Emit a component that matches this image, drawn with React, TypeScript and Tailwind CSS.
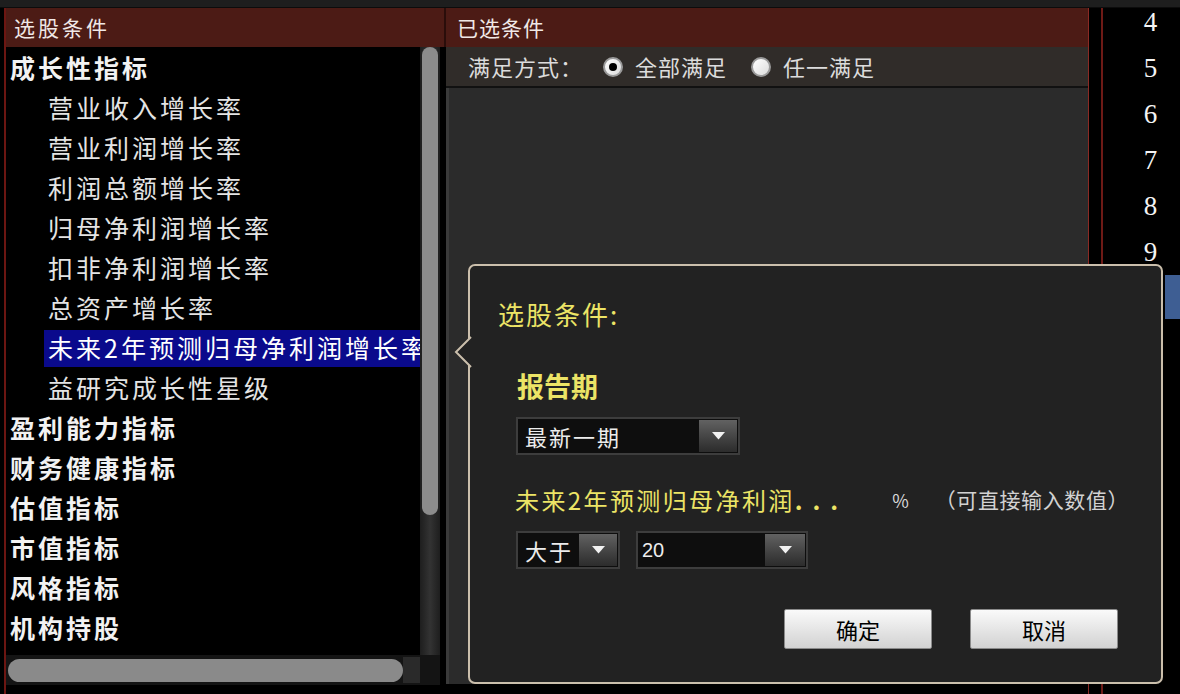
import React from "react"

const cjk = { fontFamily: '"Noto Sans CJK SC", "Noto Sans", sans-serif' }

interface TreeRow {
  label: string
  level: 0 | 1
  active?: boolean
}

const rows: TreeRow[] = [
  { label: "成长性指标", level: 0 },
  { label: "营业收入增长率", level: 1 },
  { label: "营业利润增长率", level: 1 },
  { label: "利润总额增长率", level: 1 },
  { label: "归母净利润增长率", level: 1 },
  { label: "扣非净利润增长率", level: 1 },
  { label: "总资产增长率", level: 1 },
  { label: "未来2年预测归母净利润增长率", level: 1, active: true },
  { label: "益研究成长性星级", level: 1 },
  { label: "盈利能力指标", level: 0 },
  { label: "财务健康指标", level: 0 },
  { label: "估值指标", level: 0 },
  { label: "市值指标", level: 0 },
  { label: "风格指标", level: 0 },
  { label: "机构持股", level: 0 },
  { label: "北上资金", level: 0 },
]

const rankNumbers = ["4", "5", "6", "7", "8", "9"]

function Radio({ checked }: { checked?: boolean }) {
  return (
    <span className="flex h-[20px] w-[20px] items-center justify-center rounded-full border-2 border-[#9a9a9a] bg-gradient-to-br from-white to-[#dcdcdc]">
      {checked && <span className="h-[8px] w-[8px] rounded-full bg-black" />}
    </span>
  )
}

function DropButton({ width }: { width: string }) {
  return (
    <span className={`flex h-full ${width} items-center justify-center bg-gradient-to-b from-[#626262] to-[#2c2c2c]`}>
      <svg width="13" height="8" viewBox="0 0 13 8">
        <path d="M0 0 H13 L6.5 7.5 Z" fill="#f2f2f2" />
      </svg>
    </span>
  )
}

function Select({ value, className, btn }: { value: string; className: string; btn: string }) {
  return (
    <div className={`flex h-[38px] items-stretch border-2 border-[#3d3d3d] bg-[#0e0e0e] p-[1px] ${className}`}>
      <span className="flex flex-1 items-center pl-[6px] text-[22px] tracking-[2px] text-[#ececec]">{value}</span>
      <DropButton width={btn} />
    </div>
  )
}

function ConditionDialog() {
  return (
    <div
      className="absolute left-[468px] top-[264px] flex h-[420px] w-[695px] flex-col rounded-[7px] border-2 border-[#cbbfac] bg-[#222222] pl-[28px] pt-[33px]"
      style={cjk}
    >
      <svg className="absolute left-[-16px] top-[70px]" width="18" height="32" viewBox="0 0 18 32">
        <path d="M17 1 L2 16 L17 31" fill="#222222" stroke="#cbbfac" strokeWidth="2" />
      </svg>
      <div className="h-[30px] text-[26px] leading-[30px] tracking-[2px] text-[#ece466]">选股条件:</div>

      <div className="ml-[19px] mt-[41px] h-[32px] text-[27px] font-semibold leading-[32px] text-[#ece466]">报告期</div>
      <Select value="最新一期" className="ml-[18px] mt-[15px] w-[224px]" btn="w-[38px]" />

      <div className="ml-[17px] mt-[30px] flex h-[30px] items-center">
        <span className="text-[24px] tracking-[2.4px] text-[#ece466]">未来2年预测归母净利润</span>
        <span className="text-[24px] font-bold tracking-[10px] text-[#ece466]">...</span>
        <span className="ml-[44px] text-[18px] text-[#d8d8d8]">%</span>
        <span className="ml-[26px] text-[21px] tracking-[0.6px] text-[#d2d2d2]">（可直接输入数值）</span>
      </div>

      <div className="ml-[18px] mt-[16px] flex gap-[16px]">
        <Select value="大于" className="w-[104px]" btn="w-[38px]" />
        <div className="flex h-[38px] w-[172px] items-stretch border-2 border-[#3d3d3d] bg-[#0e0e0e] p-[1px]">
          <span className="flex flex-1 items-center pl-[3px] text-[20px] text-[#ececec]" style={{ fontFamily: '"Liberation Sans Narrow", "Liberation Sans", sans-serif' }}>
            20
          </span>
          <DropButton width="w-[40px]" />
        </div>
      </div>

      <div className="mt-[40px] flex justify-end gap-[38px] pr-[43px]">
        {["确定", "取消"].map((t) => (
          <button
            key={t}
            className="h-[40px] w-[148px] rounded-[2px] border border-[#8a8a8a] bg-gradient-to-b from-[#fafafa] to-[#d2d2d2] text-[22px] text-black"
          >
            {t}
          </button>
        ))}
      </div>
    </div>
  )
}

export default function App() {
  return (
    <div className="relative flex h-[694px] w-[1180px] flex-col overflow-hidden bg-black" style={cjk}>
      <div className="h-[8px] border-b border-[#0c0c0c] bg-[#1e1e1e]" />

      <div className="flex flex-1">
        {/* left edge */}
        <div className="w-[4px] bg-black" />
        <div className="w-[2px] bg-[#6c1612]" />

        {/* stock condition tree */}
        <div className="flex w-[440px] flex-col">
          <div className="flex h-[39px] items-center border-r-2 border-[#2a0d0a] bg-[#4c1b15] pl-[8px] text-[21px] tracking-[3px] text-[#f0e8e6]">
            选股条件
          </div>
          <div className="flex h-[608px]">
            <div className="w-[414px] overflow-hidden bg-black pt-[1px]">
              {rows.map((r) =>
                r.level === 0 ? (
                  <div key={r.label} className="flex h-[40px] items-center whitespace-nowrap pl-[4px] text-[25px] font-bold tracking-[3px] text-[#f2f2f2]">
                    {r.label}
                  </div>
                ) : (
                  <div key={r.label} className="flex h-[40px] items-center whitespace-nowrap pl-[38px]">
                    <span
                      className={`flex h-[37px] items-center pl-[4px] text-[25px] tracking-[3px] ${
                        r.active ? "w-full bg-[#0a0a8c] text-white" : "text-[#e4e4e4]"
                      }`}
                    >
                      {r.label}
                    </span>
                  </div>
                )
              )}
            </div>
            <div className="flex w-[20px] flex-col bg-gradient-to-r from-[#1e1e1e] via-[#333333] to-[#1e1e1e] px-[2px]">
              <div className="h-[468px] rounded-full bg-[#8c8c8c]" />
            </div>
            <div className="w-[6px] bg-black" />
          </div>
          <div className="flex h-[30px] items-center">
            <div className="flex h-full w-[434px] items-center bg-[#141414]">
              <div className="ml-[2px] h-[23px] w-[395px] rounded-full bg-[#8a8a8a]" />
              <div className="h-[26px] w-[17px] bg-[#2a2a2a]" />
            </div>
          </div>
        </div>

        {/* selected conditions */}
        <div className="flex w-[642px] flex-col pb-[10px]">
          <div className="flex h-[39px] items-center bg-[#4c1b15] pl-[11px] text-[21px] tracking-[1px] text-[#f0e8e6]">
            已选条件
          </div>
          <div className="flex h-[41px] items-center border-b-2 border-[#111] bg-[#302c29] pl-[22px] text-[22px] tracking-[1px] text-[#dcdcdc]">
            <span>满足方式：</span>
            <span className="ml-[20px] flex items-center gap-[12px]">
              <Radio checked />
              全部满足
            </span>
            <span className="ml-[24px] flex items-center gap-[12px]">
              <Radio />
              任一满足
            </span>
          </div>
          <div className="flex-1 border-l-[3px] border-[#3a3a3a] bg-[#2b2b2b]" />
        </div>

        {/* row numbers of the quote list */}
        <div className="flex flex-1">
          <div className="w-[13px] border-l border-[#8a2a24]" />
          <div className="w-[2px] bg-[#6e1a16]" />
          <div className="-mt-[9px] flex flex-1 flex-col">
            {rankNumbers.map((n) => (
              <div
                key={n}
                className="flex h-[46px] items-center justify-center pl-[18px] text-[27px] text-[#f4f4f4]"
                style={{ fontFamily: '"Liberation Serif", serif' }}
              >
                {n}
              </div>
            ))}
            <div className="ml-auto h-[44px] w-[15px] bg-[#3e5e93]" />
          </div>
        </div>
      </div>

      <ConditionDialog />
    </div>
  )
}
